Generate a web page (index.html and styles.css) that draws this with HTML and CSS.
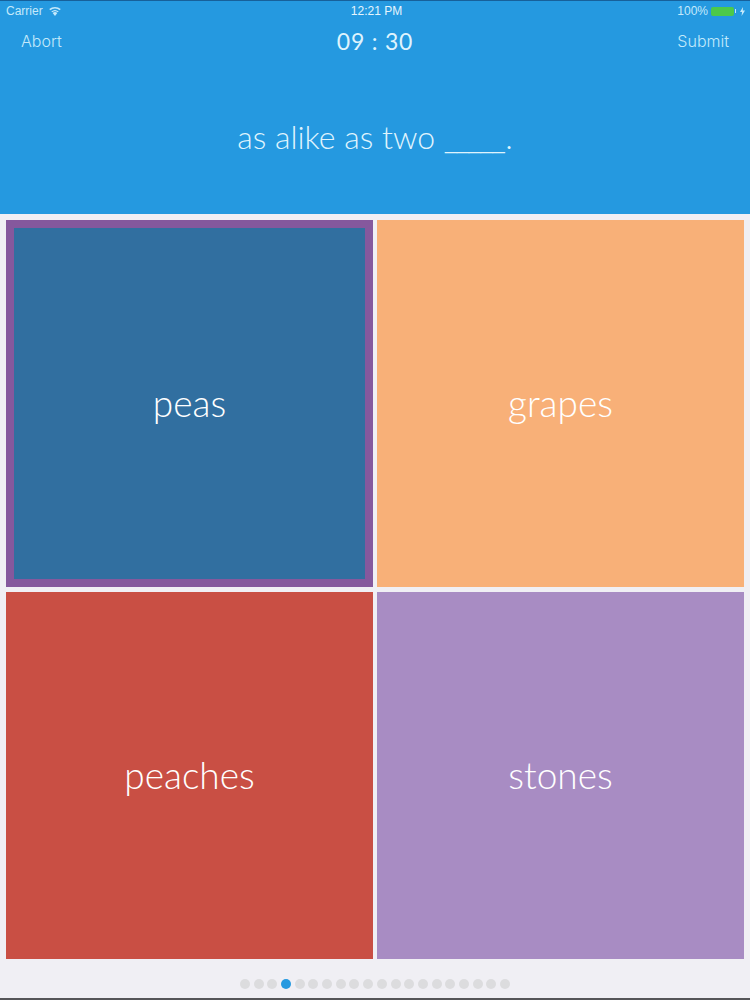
FILE: index.html
```html
<html>
<head>
    <title>Quiz</title>
    <link rel="stylesheet" href="styles.css">
</head>

<body>
    <div class="header">
        <div class="status-bar">
            <div class="status-left">
                <span>Carrier</span>
                <svg class="wifi" width="14" height="10" viewBox="0 0 12 9">
                    <path d="M6 9 L3.9 6.3 A3.4 3.4 0 0 1 8.1 6.3 Z" fill="#c4e9fb"/>
                    <path d="M2.7 4.9 A5.2 5.2 0 0 1 9.3 4.9 L8.6 5.7 A4.2 4.2 0 0 0 3.4 5.7 Z" fill="#c4e9fb"/>
                    <path d="M0.8 2.8 A7.8 7.8 0 0 1 11.2 2.8 L10.2 3.9 A6.4 6.4 0 0 0 1.8 3.9 Z" fill="#c4e9fb"/>
                </svg>
            </div>
            <div class="status-time">12:21 PM</div>
            <div class="status-right">
                <span>100%</span>
                <div class="battery"></div>
                <div class="battery-cap"></div>
                <svg class="bolt" width="5" height="9" viewBox="0 0 5 9">
                    <path d="M3 0 L0 5 H2 L1.6 9 L5 3.6 H2.8 Z" fill="#c4e9fb"/>
                </svg>
            </div>
        </div>
        <div class="nav-bar">
            <a class="nav-link">Abort</a>
            <div class="timer">09 : 30</div>
            <a class="nav-link">Submit</a>
        </div>
        <div class="question">as alike as two <span class="blank">_____</span>.</div>
    </div>

    <div class="answers">
        <div class="answer answer-selected">peas</div>
        <div class="answer answer-orange">grapes</div>
        <div class="answer answer-red">peaches</div>
        <div class="answer answer-purple">stones</div>
    </div>

    <div class="pager">
        <span class="dot"></span>
        <span class="dot"></span>
        <span class="dot"></span>
        <span class="dot dot-active"></span>
        <span class="dot"></span>
        <span class="dot"></span>
        <span class="dot"></span>
        <span class="dot"></span>
        <span class="dot"></span>
        <span class="dot"></span>
        <span class="dot"></span>
        <span class="dot"></span>
        <span class="dot"></span>
        <span class="dot"></span>
        <span class="dot"></span>
        <span class="dot"></span>
        <span class="dot"></span>
        <span class="dot"></span>
        <span class="dot"></span>
        <span class="dot"></span>
    </div>
</body>
</html>
```

FILE: styles.css
```css
html, body {
    margin: 0;
    padding: 0;
}

body {
    width: 750px;
    height: 1000px;
    overflow: hidden;
    box-sizing: border-box;
    background-color: #f0eff4;
    border-bottom: 2px solid #555558;
    font-family: "Lato", "Liberation Sans", sans-serif;
    color: #fff;
}

.header {
    height: 214px;
    box-sizing: border-box;
    background-color: #2599e0;
    border-top: 1px solid #17609a;
}

.status-bar {
    height: 20px;
    padding: 0 5px 0 6px;
    display: grid;
    grid-template-columns: 1fr auto 1fr;
    align-items: center;
    font-family: "Liberation Sans", sans-serif;
    font-size: 12px;
    color: #c4e9fb;
}

.status-left {
    display: flex;
    align-items: center;
    gap: 5px;
}

.status-time {
    color: #e4f5fd;
    margin-left: 2px;
}

.status-right {
    display: flex;
    align-items: center;
    justify-content: flex-end;
    gap: 1px;
}

.battery {
    margin-left: 2px;
    width: 23px;
    height: 9px;
    border-radius: 2px;
    background-color: #4cc94a;
}

.battery-cap {
    width: 1px;
    height: 4px;
    background-color: #c4e9fb;
}

.bolt {
    margin-left: 3px;
}

.nav-bar {
    height: 40px;
    padding: 0 21px;
    display: flex;
    align-items: center;
    justify-content: space-between;
}

.nav-link {
    width: 80px;
    font-family: "Inter", "Liberation Sans", sans-serif;
    font-weight: 300;
    font-size: 16px;
    color: #c4e9fb;
}

.nav-link:last-child {
    text-align: right;
}

.timer {
    font-size: 23px;
    letter-spacing: 0.8px;
    color: #dff3fd;
}

.question {
    margin-top: 57px;
    text-align: center;
    font-size: 32px;
    font-weight: 300;
    line-height: 38px;
    color: #dff3fd;
}

.blank {
    letter-spacing: -2.5px;
    margin-right: 2px;
}

.answers {
    padding: 6px 6px 0;
    display: grid;
    grid-template-columns: 367px 367px;
    grid-template-rows: 367px 367px;
    gap: 5px 4px;
}

.answer {
    display: flex;
    align-items: center;
    justify-content: center;
    font-size: 37px;
    font-weight: 300;
    padding-bottom: 2px;
    box-sizing: border-box;
}

.answer-selected {
    background-color: #316fa0;
    border: 8px solid #85589d;
}

.answer-orange {
    background-color: #f8b078;
}

.answer-red {
    background-color: #c94f44;
}

.answer-purple {
    background-color: #a88cc3;
}

.pager {
    margin-top: 20px;
    display: flex;
    justify-content: center;
    gap: 3.7px;
}

.dot {
    width: 10px;
    height: 10px;
    border-radius: 50%;
    background-color: #dcdcde;
}

.dot-active {
    background-color: #2599e0;
}
```
